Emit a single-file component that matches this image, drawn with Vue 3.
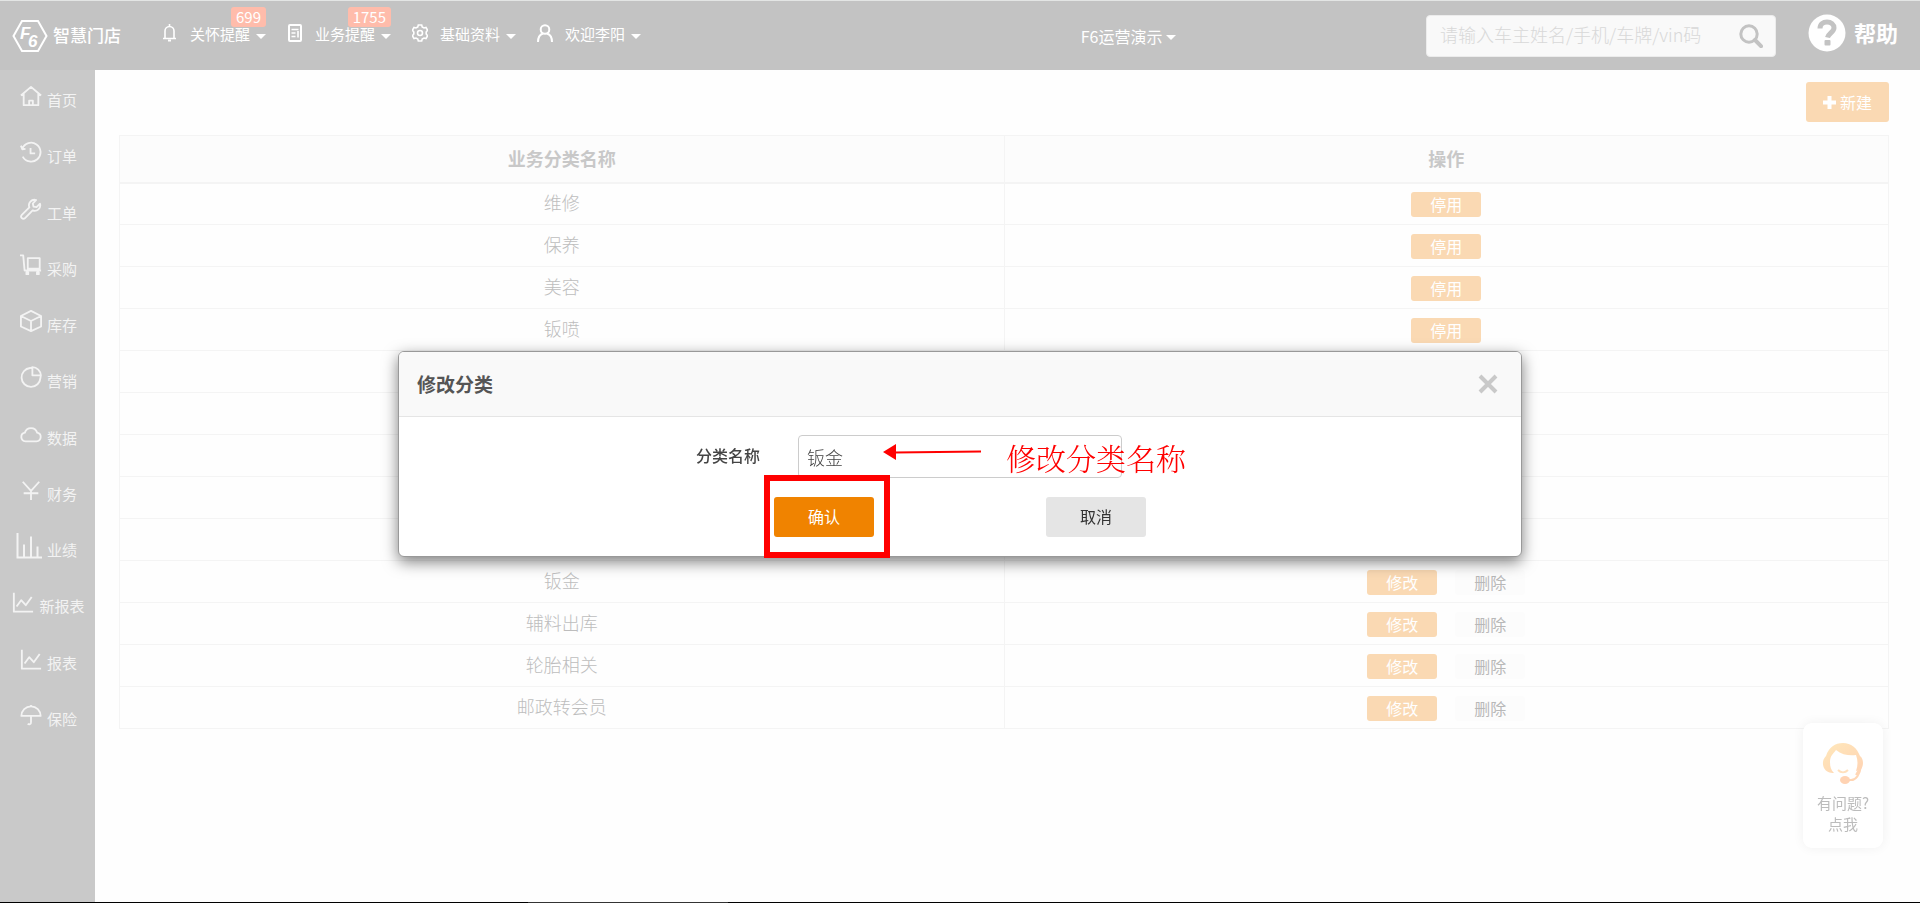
<script setup>
import { ref } from 'vue'

const keyword = ref('')
const categoryName = ref('钣金')

const topMenus = [
  { icon: 'bell', label: '关怀提醒', badge: '699' },
  { icon: 'doc', label: '业务提醒', badge: '1755' },
  { icon: 'gear', label: '基础资料' },
  { icon: 'user', label: '欢迎李阳' },
]

const sideMenus = [
  { icon: 'home', label: '首页' },
  { icon: 'history', label: '订单' },
  { icon: 'wrench', label: '工单' },
  { icon: 'cart', label: '采购' },
  { icon: 'box', label: '库存' },
  { icon: 'pie', label: '营销' },
  { icon: 'cloud', label: '数据' },
  { icon: 'yen', label: '财务' },
  { icon: 'bars', label: '业绩' },
  { icon: 'line', label: '新报表' },
  { icon: 'line', label: '报表' },
  { icon: 'umbrella', label: '保险' },
]

const icons = {
  home: 'M1 11.5 12 2l11 9.5M4 9.5v12.5h16V9.5M10 22v-5h4v5',
  history: 'M2.5 8.5A10.300 10.300 0 1 1 3 17M1 5l1.500 4 3.500-.5M11.500 7.500v6h5',
  wrench: 'M17.500 2.200a6 6 0 0 0-7.300 8L2 18.400a2.400 2.400 0 0 0 3.500 3.500l8.300-8.300a6 6 0 0 0 8-7.300l-3.800 3.700-3.300-.7-.7-3.300z',
  cart: 'M0 1.500h3.500l1.500 16.500H23M8.500 4.500h13v11.500h-13zM7 20h2v2H7zM18.500 20h2v2h-2z',
  box: 'M12 1 23 6.500v11.500L12 23 1 18V6.500zM1 6.500l11 5.500 11-5.500M12 12v11',
  pie: 'M11 2.200A10.300 10.300 0 1 0 22.300 13M13.500 1.200v9h9.300a9.500 9.500 0 0 0-9.300-9zM11 2.200l2.500-.8M22.300 13l.5-3',
  cloud: 'M6 20a4.800 4.800 0 0 1-.7-9.500 7 7 0 0 1 13.400 0A4.800 4.800 0 0 1 18 20z',
  yen: 'M3 3 12 13 21 3M4 15.500h16M12 13V23',
  line: 'M2 2v20.500H23M5 17l5-7 5 5.500L21.500 6.500',
  umbrella: 'M1.500 13a10.500 10.500 0 0 1 21 0zM12 2.500V1M12 13v7a2 2 0 0 1-3.500 1.500',
}

const rows = [
  { name: '维修', type: 'stop' },
  { name: '保养', type: 'stop' },
  { name: '美容', type: 'stop' },
  { name: '钣喷', type: 'stop' },
  { name: '', type: '' },
  { name: '', type: '' },
  { name: '', type: '' },
  { name: '', type: '' },
  { name: '', type: '' },
  { name: '钣金', type: 'edit' },
  { name: '辅料出库', type: 'edit' },
  { name: '轮胎相关', type: 'edit' },
  { name: '邮政转会员', type: 'edit' },
]
</script>

<template>
  <div class="app">
    <header class="topbar">
      <a class="brand" href="#">
        <svg width="36" height="34" viewBox="0 0 36 34" fill="none" stroke="#fff" stroke-width="2">
          <path d="M10 2h16l8.500 15L26 32H10L1.500 17z" />
          <text x="8" y="20" class="logo-glyph">F</text>
          <text x="16" y="28" class="logo-glyph">6</text>
        </svg>
        <span>智慧门店</span>
      </a>

      <nav class="menus">
        <button v-for="m in topMenus" :key="m.label" type="button" class="menu">
          <svg width="16" height="18" viewBox="0 0 16 18" fill="none" stroke="#fff" stroke-width="2">
            <template v-if="m.icon === 'bell'">
              <path d="M3 14V7a4.500 4.500 0 0 1 9 0v7M1 14.500h13M7.500 2.500V0" stroke-width="1.600" />
              <path d="M6 16.500h3" />
            </template>
            <template v-else-if="m.icon === 'doc'">
              <rect x="2" y="1" width="12" height="16" rx="1" />
              <path d="M4.500 5.500h7M4.500 9h4M4.500 12.500h4M11 7v6.500" stroke-width="1.600" />
            </template>
            <template v-else-if="m.icon === 'gear'">
              <path d="M6.300 1h3.400l.5 2 1.800 1 2-.6 1.600 2.900L14.200 8v2l1.400 1.700-1.600 2.900-2-.6-1.800 1-.5 2H6.300l-.5-2-1.800-1-2 .6-1.600-2.900L1.800 10V8L.4 6.300 2 3.400l2 .6 1.800-1z" stroke-width="1.600" />
              <circle cx="8" cy="9" r="2.500" stroke-width="1.600" />
            </template>
            <template v-else>
              <circle cx="8" cy="5.500" r="4.300" />
              <path d="M1 18c0-4.500 2-7.500 5-8.500M15 18c0-4.500-2-7.500-5-8.500" />
            </template>
          </svg>
          <span class="menu-text">{{ m.label }}</span>
          <i class="caret"></i>
          <em v-if="m.badge" class="badge">{{ m.badge }}</em>
        </button>
      </nav>

      <button type="button" class="store">F6运营演示<i class="caret"></i></button>

      <form class="search" @submit.prevent>
        <input v-model="keyword" type="text" aria-label="搜索" placeholder="请输入车主姓名/手机/车牌/vin码" />
        <button type="submit" aria-label="查询">
          <svg width="24" height="24" viewBox="0 0 24 24" fill="none" stroke="#c3c3c3" stroke-width="3">
            <circle cx="10" cy="10" r="8.200" />
            <path d="m16 16 6 6.200" stroke-width="4" stroke-linecap="round" />
          </svg>
        </button>
      </form>

      <a class="help" href="#">
        <svg width="38" height="38" viewBox="0 0 38 38">
          <circle cx="19" cy="19" r="18.500" fill="#fff" />
          <path d="M12 14.500c0-4.500 3-6.500 7-6.500s7 2.200 7 6-5.500 5.500-6.500 9.500" fill="none" stroke="#c3c3c3" stroke-width="5" />
          <rect x="16.500" y="26" width="6" height="5.500" rx="1" fill="#c3c3c3" />
        </svg>
        <span>帮助</span>
      </a>
    </header>

    <div class="body">
      <aside class="sidebar">
        <a v-for="s in sideMenus" :key="s.label" href="#" class="side-item">
          <svg v-if="s.icon === 'bars'" class="wide" width="26" height="26" viewBox="0 0 26 26" fill="none" stroke="#f3f3f3" stroke-width="2">
            <path d="M1.500 0v24.500H26M8 24V11.500M15 24V3.500M21.500 24V13.500" />
          </svg>
          <svg v-else width="22" height="22" viewBox="0 0 24 24" fill="none" stroke="#f3f3f3" stroke-width="2" stroke-linejoin="round">
            <path :d="icons[s.icon]" />
          </svg>
          <span>{{ s.label }}</span>
        </a>
      </aside>

      <main class="content">
        <div class="toolbar">
          <button type="button" class="create">
            <svg width="13" height="13" viewBox="0 0 13 13"><path d="M6.500 0v13M0 6.500h13" stroke="#fff" stroke-width="4" /></svg>
            <span>新建</span>
          </button>
        </div>

        <table class="grid">
          <thead>
            <tr><th scope="col">业务分类名称</th><th scope="col">操作</th></tr>
          </thead>
          <tbody>
            <tr v-for="(r, i) in rows" :key="i">
              <td class="name">{{ r.name }}</td>
              <td>
                <div class="actions">
                  <button v-if="r.type === 'stop'" type="button" class="small primary">停用</button>
                  <template v-else-if="r.type === 'edit'">
                    <button type="button" class="small primary">修改</button>
                    <button type="button" class="small plain">删除</button>
                  </template>
                </div>
              </td>
            </tr>
          </tbody>
        </table>
      </main>
    </div>

    <div class="bottom-line"><i></i></div>

    <button type="button" class="service">
      <svg width="42" height="42" viewBox="0 0 42 42">
        <defs>
          <linearGradient id="hair" x1="0" y1="0" x2="1" y2="1">
            <stop offset="0" stop-color="#ffe8bb" />
            <stop offset="1" stop-color="#ffd3b3" />
          </linearGradient>
        </defs>
        <path d="M4 14C7 5 13 1 21 1s14 5 17 13c4 3 4 11 0 14l-4 1c2-5 2-11 0-16-6 1-14 0-20-5-3 4-6 6-6 12 0 5 1 8 4 11-4 0-8-1-10-5-2-5-1-9 2-12z" fill="url(#hair)" />
        <path d="M39 24c-1 8-5 15-11 14h-4M34 33l4-7" fill="none" stroke="#ffd6b5" stroke-width="2" />
        <ellipse cx="23" cy="38" rx="5" ry="4" fill="#ffd3b3" />
        <path d="M16 28c3 3 7 3 10 0" fill="none" stroke="#ffe0bd" stroke-width="2" />
      </svg>
      <span>有问题?<br />点我</span>
    </button>

    <div class="overlay">
      <section class="modal" role="dialog" aria-labelledby="modal-title">
        <div class="modal-head">
          <h2 id="modal-title">修改分类</h2>
          <button type="button" class="close" aria-label="关闭">
            <svg width="20" height="20" viewBox="0 0 20 20"><path d="m2 2 16 16M18 2 2 18" stroke="#c9c9c9" stroke-width="4" /></svg>
          </button>
        </div>
        <div class="field">
          <label for="category">分类名称</label>
          <div class="field-box">
            <input id="category" v-model="categoryName" type="text" />
            <svg class="arrow" width="98" height="16" viewBox="0 0 98 16">
              <path d="M12 8.500 98 7.500" stroke="#f00" stroke-width="2" />
              <path d="M0 8 13 0v16z" fill="#f00" />
            </svg>
            <span class="note">修改分类名称</span>
          </div>
        </div>
        <div class="buttons">
          <div class="marked">
            <button type="button" class="confirm">确认</button>
            <i class="frame"></i>
          </div>
          <button type="button" class="cancel">取消</button>
        </div>
      </section>
    </div>
  </div>
</template>

<style>
body {
  margin: 0;
  background: #fefefe;
}
</style>

<style scoped>
.app {
  display: flex;
  flex-direction: column;
  min-height: 100vh;
  font-family: "Noto Sans CJK SC", sans-serif;
  font-size: 16px;
  line-height: 24px;
  color: #c8c8c8;
}
* {
  box-sizing: border-box;
}
button,
input {
  font: inherit;
  border: 0;
  padding: 0;
  margin: 0;
  background: none;
}
a {
  color: inherit;
  text-decoration: none;
}
svg {
  display: block;
  flex: none;
}
.topbar {
  display: flex;
  align-items: center;
  height: 70px;
  padding: 0 22px 0 12px;
  border-top: 1px solid #e3e5e4;
  background: #c3c3c3;
  color: #fff;
}
.brand {
  display: flex;
  align-items: center;
  gap: 5px;
  width: 150px;
  font-size: 17px;
  font-weight: 500;
}
.brand span {
  padding-bottom: 2px;
}
.logo-glyph {
  font: italic 700 17px "Liberation Sans", sans-serif;
  fill: #fff;
  stroke: none;
}
.menus {
  display: flex;
  gap: 21px;
}
.menu {
  position: relative;
  display: flex;
  align-items: center;
  height: 69px;
  padding-bottom: 4px;
  color: #fff;
  font-size: 15px;
  line-height: 20px;
}
.menu svg {
  margin: 0 12px 2px 0;
}
.caret {
  flex: none;
  margin-left: 6px;
  border: 5px solid transparent;
  border-top-color: #fff;
  border-bottom: 0;
}
.menu .caret {
  margin-top: 6px;
}
.badge {
  position: absolute;
  top: 6px;
  right: 0;
  height: 20px;
  padding: 0 5px;
  border-radius: 3px;
  background: #ffbcab;
  font-style: normal;
  line-height: 20px;
}
.store {
  display: flex;
  align-items: center;
  margin: 0 13vw 0 auto;
  color: #fff;
}
.store .caret {
  margin: 4px 0 0 4px;
}
.search {
  display: flex;
  align-items: center;
  width: 350px;
  height: 42px;
  margin-right: 32px;
  padding: 0 12px 0 13px;
  border: 1px solid #ececec;
  border-radius: 4px;
  background: #f9f9f9;
}
.search input {
  flex: 1;
  min-width: 0;
  padding-bottom: 4px;
  color: #888;
  font-size: 18px;
  font-weight: 300;
  outline: 0;
}
.search input::placeholder {
  color: #d8d8d8;
  opacity: 1;
}
.help {
  display: flex;
  align-items: center;
  gap: 8px;
  margin-bottom: 6px;
  font-size: 22px;
  font-weight: 700;
}
.help span {
  padding-bottom: 2px;
}
.body {
  flex: 1;
  display: flex;
}
.sidebar {
  flex: none;
  display: grid;
  grid-auto-rows: 1fr;
  width: 95px;
  padding-bottom: 157px;
  background: #c9c9c9;
}
.side-item {
  display: flex;
  align-items: center;
  justify-content: center;
  gap: 5px;
  min-height: 56px;
  padding-left: 2px;
  color: #f3f3f3;
  font-size: 15px;
}
.side-item svg {
  margin-bottom: 4px;
}
.side-item svg.wide {
  margin-left: -4px;
}
.side-item span {
  margin-top: 4px;
}
.content {
  flex: 1;
  padding: 12px 31px 0 24px;
}
.toolbar {
  display: flex;
  justify-content: flex-end;
  margin-bottom: 13px;
}
.create {
  display: flex;
  align-items: center;
  justify-content: center;
  gap: 4px;
  width: 83px;
  height: 40px;
  border-radius: 3px;
  background: #fad9b3;
  color: #fff;
}
.grid {
  width: 100%;
  table-layout: fixed;
  border-collapse: collapse;
  font-size: 18px;
}
.grid th,
.grid td {
  height: 42px;
  padding: 0;
  border: 1px solid #f4f4f4;
  text-align: center;
}
.grid th {
  height: 47px;
  padding-bottom: 2px;
  border-bottom-width: 2px;
  background: #fcfcfc;
  font-weight: 700;
}
.grid .name {
  padding-bottom: 4px;
  font-weight: 300;
  color: #bdbdbd;
}
.actions {
  display: flex;
  justify-content: center;
  gap: 18px;
  padding-top: 2px;
}
.small {
  width: 70px;
  height: 25px;
  border-radius: 3px;
  font-size: 16px;
  font-weight: 400;
  line-height: 25px;
}
.primary {
  background: #fad9b3;
  color: #fff;
}
.plain {
  background: #fcfcfc;
  color: #b8b8b8;
}
.bottom-line {
  height: 1px;
  background: #000;
}
.bottom-line i {
  display: block;
  width: 200px;
  height: 1px;
  margin-left: 528px;
  background: #333;
}
.service {
  position: fixed;
  right: 37px;
  bottom: 55px;
  display: flex;
  flex-direction: column;
  align-items: center;
  gap: 8px;
  width: 80px;
  height: 125px;
  padding-top: 19px;
  border-radius: 9px;
  background: #fff;
  box-shadow: 0 0 12px rgba(0, 0, 0, 0.06);
  color: #bcbcbc;
  font-size: 15px;
  line-height: 21px;
}
.overlay {
  position: fixed;
  inset: 0;
  display: flex;
  align-items: flex-start;
  justify-content: center;
  padding-top: 351px;
}
.modal {
  width: 1124px;
  border: 1px solid #999;
  border-radius: 6px;
  background: #fff;
  box-shadow: 0 5px 15px rgba(0, 0, 0, 0.5);
  color: #444;
  padding-bottom: 19px;
}
.modal-head {
  display: flex;
  align-items: center;
  justify-content: space-between;
  height: 65px;
  padding: 0 23px 0 18px;
  border-bottom: 1px solid #e5e5e5;
  border-radius: 5px 5px 0 0;
  background: #f9f9f9;
}
.modal-head h2 {
  margin: 0;
  font-size: 19px;
  font-weight: 700;
  color: #555;
}
.field {
  display: grid;
  grid-template-columns: 361px 324px;
  column-gap: 38px;
  align-items: center;
  margin-top: 18px;
}
.field label {
  padding-bottom: 4px;
  text-align: right;
  font-weight: 500;
}
.field-box {
  position: relative;
}
.field-box input {
  display: block;
  width: 100%;
  height: 43px;
  padding: 0 8px;
  border: 1px solid #ccc;
  border-radius: 4px;
  color: #444;
  font-size: 18px;
  font-weight: 300;
  outline: 0;
}
.arrow {
  position: absolute;
  top: 9px;
  left: 85px;
}
.note {
  position: absolute;
  top: 4px;
  left: 208px;
  color: #f00;
  font-family: "SimSun", "Noto Serif CJK SC", "Noto Sans CJK SC", serif;
  font-size: 30px;
  font-weight: 300;
  line-height: 36px;
  white-space: nowrap;
}
.buttons {
  display: flex;
  justify-content: center;
  gap: 172px;
  margin-top: 19px;
}
.marked {
  position: relative;
}
.confirm,
.cancel {
  width: 100px;
  height: 40px;
  padding-bottom: 2px;
  border-radius: 3px;
  background: #e5e5e5;
  color: #333;
}
.confirm {
  display: block;
  background: #f08300;
  color: #fff;
}
.frame {
  position: absolute;
  inset: -22px -16px -21px -10px;
  border: 6px solid #f00;
  pointer-events: none;
}
</style>
